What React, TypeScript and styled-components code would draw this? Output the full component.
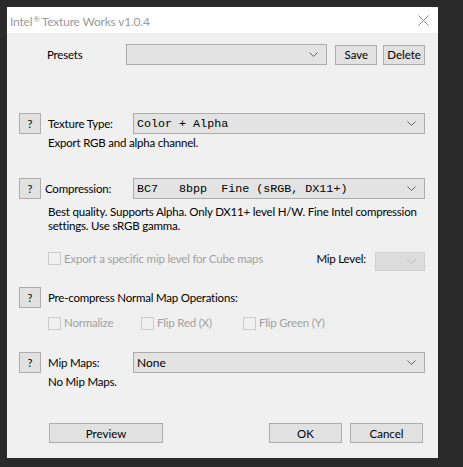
import React from 'react'
import styled, { createGlobalStyle } from 'styled-components'

const GlobalStyle = createGlobalStyle`
  html, body {
    margin: 0;
    padding: 0;
    background: #2a2a2a;
  }
  body {
    font-family: Lato, "Liberation Sans", sans-serif;
    font-size: 11.5px;
    letter-spacing: -0.2px;
    line-height: 14px;
    color: #000;
  }
`

const Desktop = styled.div`
  width: 463px;
  height: 467px;
  padding: 7px 0 0 7px;
  box-sizing: border-box;
`

const Window = styled.div`
  width: 431px;
  height: 451px;
  background: #f0f0f0;
  display: flex;
  flex-direction: column;
  overflow: hidden;
`

const TitleBar = styled.div`
  flex-shrink: 0;
  height: 26px;
  background: #fff;
  display: flex;
  align-items: center;
  justify-content: space-between;
  padding: 0 9px 0 3px;
`

const Title = styled.span`
  color: #9a9a9a;
  font-size: 12px;
  sup {
    font-size: 8px;
    vertical-align: 4px;
    margin: 0 2px 0 1px;
  }
`

const CloseButton = styled.span`
  width: 11px;
  height: 11px;
  display: flex;
  align-items: center;
  justify-content: center;
`

const Body = styled.div`
  flex: 1;
  display: flex;
  flex-direction: column;
  padding: 0 13px 0 12px;
`

const FieldRow = styled.div<{ $top: number }>`
  flex-shrink: 0;
  display: grid;
  grid-template-columns: 22px 78px 1fr;
  column-gap: 7px;
  align-items: center;
  margin-top: ${p => p.$top}px;
  height: 21px;
`

const HelpButton = styled.button`
  width: 22px;
  height: 21px;
  padding: 0;
  margin: 0;
  background: #e1e1e1;
  border: 1px solid #adadad;
  font-family: inherit;
  font-size: 11px;
  color: #000;
`

const Label = styled.span<{ $shift?: number }>`
  white-space: nowrap;
  margin-left: ${p => p.$shift ?? 0}px;
`

const Select = styled.div<{ $mono?: boolean; $disabled?: boolean }>`
  height: 21px;
  box-sizing: border-box;
  background: ${p => (p.$disabled ? '#dcdcdc' : '#e3e3e3')};
  border: 1px solid ${p => (p.$disabled ? '#d0d0d0' : '#acacac')};
  display: flex;
  align-items: center;
  justify-content: space-between;
  padding: 0 8px 0 3px;
  font-family: ${p =>
    p.$mono ? '"Liberation Mono", "Courier New", monospace' : 'inherit'};
  font-size: ${p => (p.$mono ? '11.7px' : '12px')};
  letter-spacing: 0;
  white-space: pre;
`

const Chevron = ({ color = '#606060' }: { color?: string }) => (
  <svg width="9" height="5" viewBox="0 0 9 5">
    <path d="M0.5 0.5 L4.5 4.5 L8.5 0.5" fill="none" stroke={color} strokeWidth="1" />
  </svg>
)

const PresetRow = styled.div`
  flex-shrink: 0;
  display: flex;
  align-items: center;
  margin-top: 11px;
  height: 21px;
`

const PresetLabel = styled.span`
  width: 79px;
  margin-left: 28px;
`

const PresetSelect = styled(Select)`
  width: 203px;
`

const Button = styled.button<{ $width: number }>`
  width: ${p => p.$width}px;
  height: 20px;
  padding: 0;
  margin: 0;
  background: #e1e1e1;
  border: 1px solid #adadad;
  font-family: inherit;
  font-size: 11.5px;
  font-weight: 400;
  color: #000;
`

const Description = styled.div<{ $top: number }>`
  flex-shrink: 0;
  margin: ${p => p.$top}px 0 0 29px;
  line-height: 14px;
  white-space: nowrap;
`

const CheckRow = styled.div<{ $top: number }>`
  flex-shrink: 0;
  display: flex;
  align-items: center;
  margin: ${p => p.$top}px 0 0 29px;
`

const Check = styled.label<{ $width?: number }>`
  display: flex;
  align-items: center;
  gap: 3px;
  color: #a0a0a0;
  width: ${p => (p.$width ? `${p.$width}px` : 'auto')};
  white-space: nowrap;
`

const Box = styled.span`
  width: 13px;
  height: 13px;
  box-sizing: border-box;
  border: 1px solid #cccccc;
  background: #f0f0f0;
`

const MipLevel = styled.div`
  margin-left: auto;
  display: flex;
  align-items: center;
  gap: 9px;
`

const MipSelect = styled(Select)`
  width: 50px;
  height: 19px;
  margin-top: 6px;
`

const SectionRow = styled.div<{ $top: number }>`
  flex-shrink: 0;
  display: flex;
  align-items: center;
  gap: 7px;
  margin-top: ${p => p.$top}px;
`

const Footer = styled.div`
  flex-shrink: 0;
  display: flex;
  align-items: center;
  margin: 34px 0 0 30px;
`

const FooterRight = styled.div`
  display: flex;
  gap: 8px;
  margin-left: auto;
  margin-right: 2px;
`

export default function App() {
  return (
    <>
      <GlobalStyle />
      <Desktop>
        <Window>
          <TitleBar>
            <Title>
              Intel<sup>®</sup>Texture Works v1.0.4
            </Title>
            <CloseButton>
              <svg width="11" height="11" viewBox="0 0 11 11">
                <path d="M0.5 0.5 L10.5 10.5 M10.5 0.5 L0.5 10.5" stroke="#8a8a8a" strokeWidth="1" />
              </svg>
            </CloseButton>
          </TitleBar>
          <Body>
            <PresetRow>
              <PresetLabel>Presets</PresetLabel>
              <PresetSelect>
                <span />
                <Chevron />
              </PresetSelect>
              <Button $width={42} style={{ marginLeft: 8 }}>Save</Button>
              <Button $width={42} style={{ marginLeft: 6 }}>Delete</Button>
            </PresetRow>

            <FieldRow $top={48}>
              <HelpButton>?</HelpButton>
              <Label>Texture Type:</Label>
              <Select $mono>
                <span>Color + Alpha</span>
                <Chevron />
              </Select>
            </FieldRow>
            <Description $top={2}>Export RGB and alpha channel.</Description>

            <FieldRow $top={28}>
              <HelpButton>?</HelpButton>
              <Label $shift={-3}>Compression:</Label>
              <Select $mono>
                <span>BC7   8bpp  Fine (sRGB, DX11+)</span>
                <Chevron />
              </Select>
            </FieldRow>
            <Description $top={6}>
              Best quality. Supports Alpha. Only DX11+ level H/W. Fine Intel compression
              <br />
              settings. Use sRGB gamma.
            </Description>

            <CheckRow $top={13}>
              <Check>
                <Box />
                Export a specific mip level for Cube maps
              </Check>
              <MipLevel>
                <span>Mip Level:</span>
                <MipSelect $disabled>
                  <span />
                  <Chevron color="#b8b8b8" />
                </MipSelect>
              </MipLevel>
            </CheckRow>

            <SectionRow $top={16}>
              <HelpButton>?</HelpButton>
              <span>Pre-compress Normal Map Operations:</span>
            </SectionRow>
            <CheckRow $top={8}>
              <Check $width={93}>
                <Box />
                Normalize
              </Check>
              <Check $width={102}>
                <Box />
                Flip Red (X)
              </Check>
              <Check>
                <Box />
                Flip Green (Y)
              </Check>
            </CheckRow>

            <FieldRow $top={22}>
              <HelpButton>?</HelpButton>
              <Label>Mip Maps:</Label>
              <Select>
                <span>None</span>
                <Chevron />
              </Select>
            </FieldRow>
            <Description $top={2}>No Mip Maps.</Description>

            <Footer>
              <Button $width={114}>Preview</Button>
              <FooterRight>
                <Button $width={73}>OK</Button>
                <Button $width={73}>Cancel</Button>
              </FooterRight>
            </Footer>
          </Body>
        </Window>
      </Desktop>
    </>
  )
}
